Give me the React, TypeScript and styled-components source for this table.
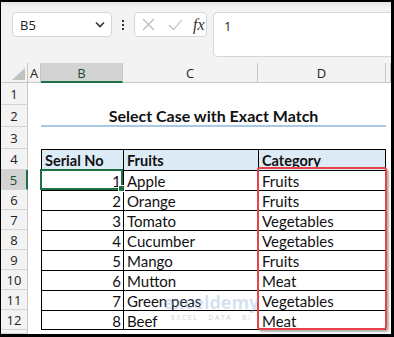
import React from "react";
import styled, { createGlobalStyle } from "styled-components";

const GlobalStyle = createGlobalStyle`
  html, body { margin: 0; padding: 0; background: #000; }
  body { font-family: "Lato", "Liberation Sans", sans-serif; }
`;

const Frame = styled.div`
  width: 394px;
  height: 337px;
  box-sizing: border-box;
  border-style: solid;
  border-color: #000;
  border-width: 2px 3px 3px 1px;
  background: #fff;
  overflow: hidden;
  display: flex;
  flex-direction: column;
`;

const Toolbar = styled.div`
  height: 61px;
  flex: none;
  background: linear-gradient(#e6e6e6 0, #f3f3f3 6px);
  display: flex;
  align-items: flex-start;
  padding: 10px 0 0 11px;
  box-sizing: border-box;
`;

const NameBox = styled.div`
  width: 100px;
  height: 25px;
  box-sizing: border-box;
  background: #fff;
  border: 1px solid #d6d6d6;
  border-radius: 4px;
  display: flex;
  align-items: center;
  justify-content: space-between;
  padding: 0 6px 0 7px;
  font-family: "Open Sans", sans-serif;
  font-size: 13px;
  color: #222;
`;

const Dots = styled.div`
  width: 22px;
  height: 25px;
  display: flex;
  flex-direction: column;
  align-items: center;
  justify-content: center;
  gap: 2px;
  span {
    width: 2px;
    height: 2px;
    background: #333;
  }
`;

const FxBox = styled.div`
  width: 73px;
  height: 25px;
  box-sizing: border-box;
  background: #fff;
  border: 1px solid #d6d6d6;
  border-radius: 4px;
  display: flex;
  align-items: center;
  padding-left: 7px;
  gap: 13px;
`;

const Fx = styled.span`
  font-family: "Liberation Serif", serif;
  font-style: italic;
  font-size: 16px;
  color: #333;
  margin-left: -3px;
`;

const FormulaBox = styled.div`
  margin-left: 6px;
  flex: 1;
  height: 45px;
  box-sizing: border-box;
  background: #fff;
  border: 1px solid #d6d6d6;
  border-right: none;
  border-radius: 5px 0 0 5px;
  padding: 4px 0 0 10px;
  font-family: "Open Sans", sans-serif;
  font-size: 13px;
  color: #222;
`;

const Sheet = styled.div`
  position: relative;
  flex: 1;
  display: grid;
  grid-template-columns: 27px 13px 82px 135px 128px 1fr;
  grid-template-rows: 20px 22px 22px 22px 21px repeat(8, 20px) 1fr;
  background: #fff;
`;

const Corner = styled.div`
  background: #f3f3f3;
  border-bottom: 1px solid #c6c6c6;
  border-right: 1px solid #c6c6c6;
  box-sizing: border-box;
  position: relative;
  svg { position: absolute; right: 2px; bottom: 2px; }
`;

const ColHead = styled.div<{ $sel?: boolean }>`
  background: ${({ $sel }) => ($sel ? "#d3d3d3" : "#f3f3f3")};
  border-bottom: ${({ $sel }) => ($sel ? "2px solid #1e7145" : "1px solid #c6c6c6")};
  border-right: 1px solid #c6c6c6;
  box-sizing: border-box;
  display: flex;
  align-items: center;
  justify-content: center;
  font-family: "Open Sans", sans-serif;
  font-size: 13px;
  color: ${({ $sel }) => ($sel ? "#1a4d32" : "#222")};
  padding-top: 1px;
`;

const RowHead = styled.div<{ $sel?: boolean }>`
  background: ${({ $sel }) => ($sel ? "#d3d3d3" : "#f3f3f3")};
  border-bottom: 1px solid #d4d4d4;
  border-right: ${({ $sel }) => ($sel ? "2px solid #1e7145" : "1px solid #c6c6c6")};
  box-sizing: border-box;
  display: flex;
  align-items: center;
  justify-content: center;
  font-family: "Open Sans", sans-serif;
  font-size: 13px;
  color: ${({ $sel }) => ($sel ? "#1a4d32" : "#222")};
`;

const Blank = styled.div``;

const Title = styled.div`
  grid-column: 3 / 6;
  display: flex;
  align-items: center;
  justify-content: center;
  font-weight: 700;
  font-size: 16px;
  color: #111;
  border-bottom: 2px solid #a8c8e6;
  padding-top: 1px;
`;

const Cell = styled.div<{ $head?: boolean; $right?: boolean; $last?: boolean; $end?: boolean }>`
  box-sizing: border-box;
  border-left: 1px solid #000;
  border-top: 1px solid #000;
  border-right: ${({ $end }) => ($end ? "1px solid #000" : "none")};
  border-bottom: ${({ $last }) => ($last ? "1px solid #000" : "none")};
  background: ${({ $head }) => ($head ? "#ddebf7" : "#fff")};
  font-weight: ${({ $head }) => ($head ? 700 : 400)};
  font-size: ${({ $head }) => ($head ? "14.5px" : "15px")};
  color: #111;
  display: flex;
  align-items: center;
  justify-content: ${({ $right }) => ($right ? "flex-end" : "flex-start")};
  padding: ${({ $right }) => ($right ? "1px 2px 0 0" : "1px 0 0 3px")};
  white-space: nowrap;
  overflow: hidden;
`;

const Selection = styled.div`
  position: absolute;
  left: 39px;
  top: 106px;
  width: 83px;
  height: 21px;
  box-sizing: border-box;
  border: 2px solid #1e7145;
  &::after {
    content: "";
    position: absolute;
    right: -4px;
    bottom: -4px;
    width: 5px;
    height: 5px;
    background: #1e7145;
    border: 1px solid #fff;
  }
`;

const RedBox = styled.div`
  position: absolute;
  left: 256px;
  top: 104px;
  width: 130px;
  height: 163px;
  box-sizing: border-box;
  border: 2px solid #e8414a;
  border-radius: 3px;
  box-shadow: 2px 2px 2px rgba(0, 0, 0, 0.3);
`;

const Watermark = styled.div`
  position: absolute;
  left: 162px;
  top: 230px;
  display: flex;
  flex-direction: column;
  align-items: flex-start;
  pointer-events: none;
`;

const WmLogo = styled.span`
  font-family: "Open Sans", sans-serif;
  font-weight: 700;
  font-size: 18px;
  color: rgba(120, 160, 210, 0.32);
  line-height: 19px;
`;

const WmTag = styled.span`
  font-family: "Open Sans", sans-serif;
  font-size: 7px;
  letter-spacing: 1.5px;
  color: rgba(140, 140, 140, 0.45);
  margin: 1px 0 0 8px;
`;

const rows: [number, string, string][] = [
  [1, "Apple", "Fruits"],
  [2, "Orange", "Fruits"],
  [3, "Tomato", "Vegetables"],
  [4, "Cucumber", "Vegetables"],
  [5, "Mango", "Fruits"],
  [6, "Mutton", "Meat"],
  [7, "Green peas", "Vegetables"],
  [8, "Beef", "Meat"],
];

const Chevron = () => (
  <svg width="10" height="7" viewBox="0 0 10 7">
    <path d="M1 1.5 L5 5.5 L9 1.5" fill="none" stroke="#333" strokeWidth="1.6" />
  </svg>
);

const Cross = () => (
  <svg width="13" height="13" viewBox="0 0 13 13">
    <path d="M1 1 L12 12 M12 1 L1 12" stroke="#b8b8b8" strokeWidth="1.1" />
  </svg>
);

const Check = () => (
  <svg width="15" height="12" viewBox="0 0 15 12">
    <path d="M1 6 L5.5 10.5 L14 1" fill="none" stroke="#b8b8b8" strokeWidth="1.1" />
  </svg>
);

export default function App() {
  return (
    <>
      <GlobalStyle />
      <Frame>
        <Toolbar>
          <NameBox>
            <span>B5</span>
            <Chevron />
          </NameBox>
          <Dots>
            <span />
            <span />
            <span />
          </Dots>
          <FxBox>
            <Cross />
            <Check />
            <Fx>fx</Fx>
          </FxBox>
          <FormulaBox>1</FormulaBox>
        </Toolbar>
        <Sheet>
          <Corner>
            <svg width="13" height="12" viewBox="0 0 13 12">
              <path d="M13 0 L13 12 L0 12 Z" fill="#c2c2c2" />
            </svg>
          </Corner>
          <ColHead>A</ColHead>
          <ColHead $sel>B</ColHead>
          <ColHead>C</ColHead>
          <ColHead>D</ColHead>
          <ColHead />

          <RowHead>1</RowHead>
          <Blank style={{ gridColumn: "2 / 7" }} />

          <RowHead>2</RowHead>
          <Blank />
          <Title>Select Case with Exact Match</Title>
          <Blank />

          <RowHead>3</RowHead>
          <Blank style={{ gridColumn: "2 / 7" }} />

          <RowHead>4</RowHead>
          <Blank />
          <Cell $head>Serial No</Cell>
          <Cell $head>Fruits</Cell>
          <Cell $head $end>Category</Cell>
          <Blank />

          {rows.map(([n, fruit, cat], i) => {
            const last = i === rows.length - 1;
            return (
              <React.Fragment key={n}>
                <RowHead $sel={n === 1}>{n + 4}</RowHead>
                <Blank />
                <Cell $right $last={last}>{n}</Cell>
                <Cell $last={last}>{fruit}</Cell>
                <Cell $last={last} $end>{cat}</Cell>
                <Blank />
              </React.Fragment>
            );
          })}
          <RowHead />

          <Selection />
          <RedBox />
          <Watermark>
            <WmLogo>exceldemy</WmLogo>
            <WmTag>EXCEL · DATA · BI</WmTag>
          </Watermark>
        </Sheet>
      </Frame>
    </>
  );
}
